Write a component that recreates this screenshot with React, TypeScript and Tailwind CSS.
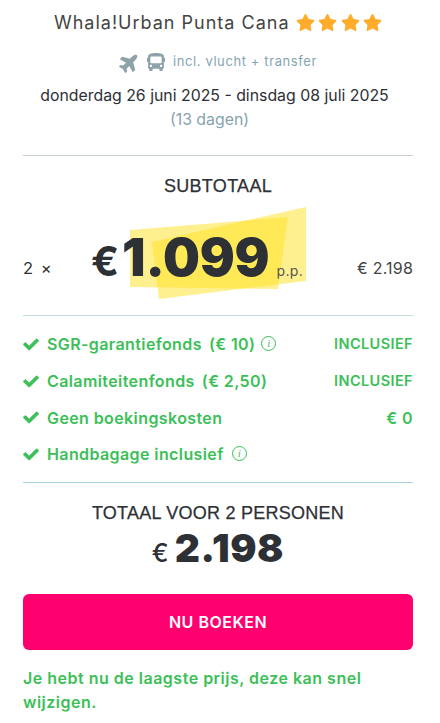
import { FaBus, FaCheck, FaPlane, FaStar } from "react-icons/fa";

const sans = "font-['Inter','Noto_Sans',sans-serif]";
const arial = "font-['Liberation_Sans',Arial,sans-serif]";

function Info({ wide }: { wide?: boolean }) {
  return (
    <span className={`${wide ? "ml-2" : "ml-[6px]"} mb-[2px] flex h-[15px] w-[15px] items-center justify-center rounded-full border border-[#3cbf58] font-['Liberation_Serif',serif] text-[11px] font-normal italic leading-none text-[#3cbf58]`}>
      i
    </span>
  );
}

function Row({ label, extra, value, info, big }: { label: string; extra?: string; value?: string; info?: "near" | "wide"; big?: boolean }) {
  return (
    <div className="flex h-[36.7px] items-center justify-between text-[16px] font-semibold tracking-[0.4px] text-[#3cbf58]">
      <div className="flex items-center">
        <FaCheck className="mr-2 h-[15px] w-[16px]" stroke="currentColor" strokeWidth={30} />
        <span>{label}</span>
        {extra && <span className="ml-[7px]">{extra}</span>}
        {info && <Info wide={info === "wide"} />}
      </div>
      {value && <span className={big ? "text-[16px]" : "text-[14.5px]"}>{value}</span>}
    </div>
  );
}

export default function App() {
  return (
    <div className={`${sans} h-[723px] w-[440px] overflow-hidden bg-white pl-[23px] pr-[27px] text-[#2d3035]`}>
      <div className="flex h-[44px] items-center justify-center text-[18px] tracking-[1px] text-[#444]">
        <span>Whala!Urban Punta Cana</span>
        <span className="ml-[6px] flex gap-[3.5px] text-[#ffab2b]">
          <FaStar className="h-[19px] w-[19px]" />
          <FaStar className="h-[19px] w-[19px]" />
          <FaStar className="h-[19px] w-[19px]" />
          <FaStar className="h-[19px] w-[19px]" />
        </span>
      </div>
      <div className="mt-[5px] flex h-[26px] items-center justify-center text-[#86a4b0]">
        <FaPlane className="h-[21px] w-[21px] -rotate-45 text-[#8ea2a9]" />
        <FaBus className="ml-[7px] h-[20px] w-[18px] text-[#8ea2a9]" />
        <span className="ml-[8px] text-[13px] tracking-[0.6px]">incl. vlucht + transfer</span>
      </div>
      <div className="mt-[9px] pr-[7px] text-center text-[15.85px] leading-[24px]">donderdag 26 juni 2025 - dinsdag 08 juli 2025</div>
      <div className="pr-[17px] text-center text-[15.85px] leading-[24px] text-[#86a4b0]">(13 dagen)</div>
      <div className="mt-[23px] h-px bg-[#c5cfd3]" />

      <div className={`${arial} mt-[20px] text-center text-[18px] leading-[20px] tracking-[0.3px] [-webkit-text-stroke:0.25px_#2d3035]`}>SUBTOTAAL</div>

      <div className="relative mt-[16px] flex h-[106px] items-center justify-between pt-[6px]">
        <span className="text-[16.5px] tracking-[1.5px]">2 ×</span>
        <svg className="absolute left-[107px] top-[-5px] h-[92px] w-[176px]" viewBox="130 207 176 92">
          <polygon points="130,230 288,217 278,289 130,287" fill="#ffe11f" fillOpacity="0.5" />
          <polygon points="152,242 306,207 306,281 159,299" fill="#ffe11f" fillOpacity="0.5" />
        </svg>
        <div className="absolute left-[68px] top-[22px] flex items-baseline">
          <span className="text-[41px] font-bold leading-[48px]">€</span>
          <span className="ml-[3px] text-[52px] font-black leading-[48px] tracking-[-0.2px]">1.099</span>
          <span className="ml-[7px] text-[14px] tracking-[0.4px] text-[#555]">p.p.</span>
        </div>
        <span className="text-[16px] tracking-[0.2px] text-[#444]">€ 2.198</span>
      </div>

      <div className="mt-[-3px] h-px bg-[#c5d8dd]" />

      <div className="pt-[10px]">
        <Row label="SGR-garantiefonds" extra="(€ 10)" value="INCLUSIEF" info="near" />
        <Row label="Calamiteitenfonds" extra="(€ 2,50)" value="INCLUSIEF" />
        <Row label="Geen boekingskosten" value="€ 0" big />
        <Row label="Handbagage inclusief" info="wide" />
      </div>

      <div className="mt-[9px] h-px bg-[#a9d5e3]" />

      <div className={`${arial} mt-[20px] text-center text-[18px] leading-[20px] tracking-[0.25px] [-webkit-text-stroke:0.25px_#2d3035]`}>TOTAAL VOOR 2 PERSONEN</div>
      <div className="mt-[2px] flex items-baseline justify-center leading-[46px]">
        <span className="text-[25px] font-medium">€</span>
        <span className="ml-[6px] text-[39px] font-black tracking-[0.6px]">2.198</span>
      </div>

      <button className="mt-[18px] flex h-[56px] w-full items-center justify-center rounded-[6px] bg-[#ff006e] text-[16px] font-semibold tracking-[0.5px] text-white">
        NU BOEKEN
      </button>

      <p className="mt-[16px] text-[16px] font-semibold leading-[24px] tracking-[0.5px] text-[#3cbf58]">
        Je hebt nu de laagste prijs, deze kan snel wijzigen.
      </p>
    </div>
  );
}
